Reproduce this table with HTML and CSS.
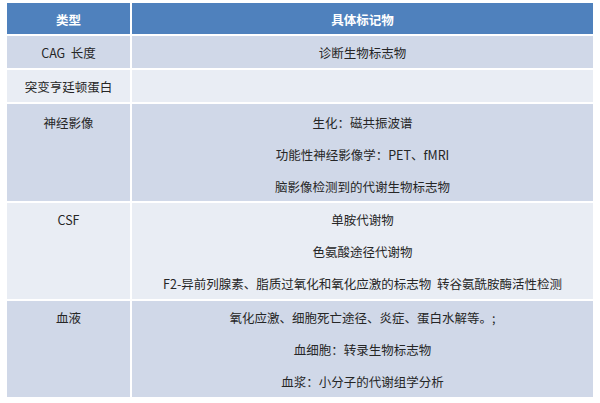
FILE: index.html
```html
<!DOCTYPE html>
<html lang="zh-CN">
<head>
<meta charset="utf-8">
<link rel="stylesheet" href="styles.css">
</head>
<body>
<div class="table">
  <div class="cell head">类型</div>
  <div class="cell head">具体标记物</div>

  <div class="cell odd h32"><p>CAG&nbsp; 长度</p></div>
  <div class="cell odd h32"><p>诊断生物标志物</p></div>

  <div class="cell even h32"><p>突变亨廷顿蛋白</p></div>
  <div class="cell even h32"></div>

  <div class="cell odd tall first"><p>神经影像</p></div>
  <div class="cell odd tall first">
    <p>生化：磁共振波谱</p>
    <p>功能性神经影像学：PET、fMRI</p>
    <p>脑影像检测到的代谢生物标志物</p>
  </div>

  <div class="cell even tall"><p>CSF</p></div>
  <div class="cell even tall">
    <p>单胺代谢物</p>
    <p>色氨酸途径代谢物</p>
    <p>F2-异前列腺素、脂质过氧化和氧化应激的标志物&nbsp; 转谷氨酰胺酶活性检测</p>
  </div>

  <div class="cell odd tall"><p>血液</p></div>
  <div class="cell odd tall">
    <p>氧化应激、细胞死亡途径、炎症、蛋白水解等。;</p>
    <p>血细胞：转录生物标志物</p>
    <p>血浆：小分子的代谢组学分析</p>
  </div>
</div>
</body>
</html>
```

FILE: styles.css
```css
html, body {
  margin: 0;
  padding: 0;
  background: #ffffff;
}

body {
  font-family: "Noto Sans CJK SC", "Noto Sans", sans-serif;
  font-size: 12.5px;
  color: #262626;
}

.table {
  display: grid;
  grid-template-columns: 123px 1fr;
  grid-template-rows: 31px 32px 32px 97px 96px 96px;
  gap: 2px;
  padding: 3px 7px 0 7px;
  width: 600px;
  box-sizing: border-box;
}

.cell {
  text-align: center;
  padding-top: 1px;
  box-sizing: border-box;
}

.cell p {
  margin: 0;
  line-height: 32px;
  white-space: nowrap;
}

.cell.first {
  padding-top: 3px;
}

.head {
  background: #4f81bd;
  color: #ffffff;
  font-weight: bold;
  line-height: 31px;
  padding-top: 2px;
  line-height: 29px;
}

.odd {
  background: #d0d8e8;
}

.even {
  background: #e9edf4;
}
```
